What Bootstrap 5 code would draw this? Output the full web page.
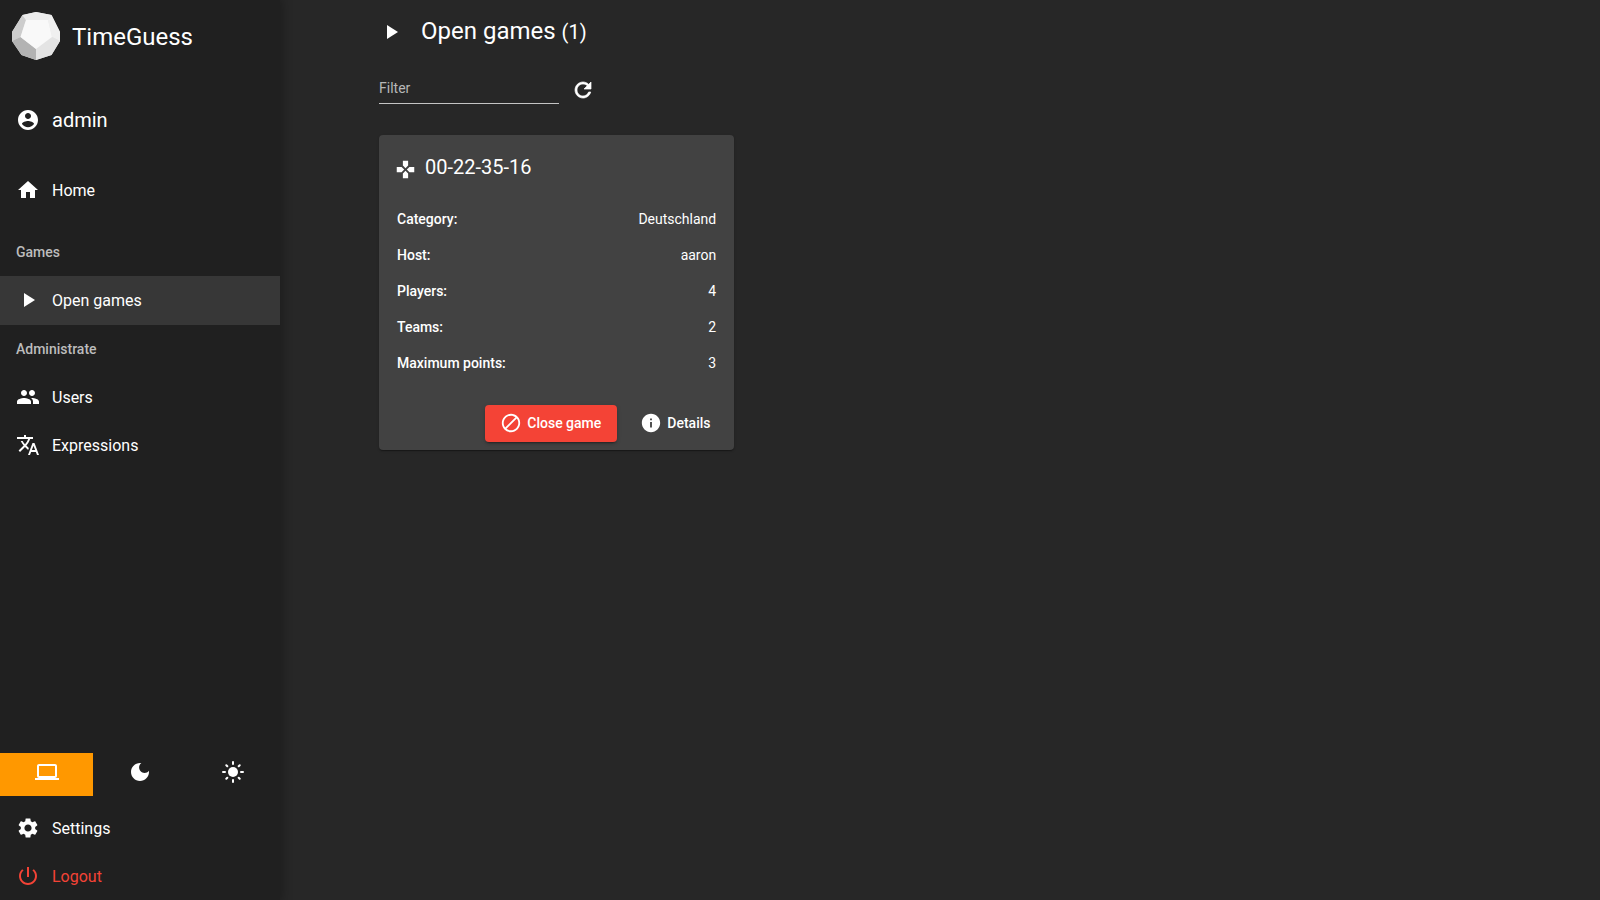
<!DOCTYPE html>
<html lang="en" data-bs-theme="dark">
<head>
<meta charset="utf-8">
<meta name="viewport" content="width=device-width, initial-scale=1">
<title>TimeGuess</title>
<link rel="stylesheet" href="https://cdn.jsdelivr.net/npm/bootstrap@5.3.0/dist/css/bootstrap.min.css">
<style>
  body { font-family: Roboto, "Liberation Sans", sans-serif; font-size: 14px; line-height: 20px; background: #272727; color: #fff; }
  svg { fill: currentColor; flex: none; width: 24px; height: 24px; }
  .side { width: 280px; background: #202020; box-shadow: 0 0 10px 2px rgba(0,0,0,.28); }
  .brand { height: 72px; padding-left: 12px; gap: 12px; font-size: 24px; }
  .brand svg { width: 48px; height: 48px; }
  .brand span { padding-top: 2px; }
  .side .nav-link { height: 48px; padding: 1px 16px 0; gap: 12px; font-size: 16px; color: #fff; }
  .side .nav-link svg { margin-top: -1px; }
  .side .nav-link.user { padding-top: 0; font-size: 20px; margin-top: 24px; margin-bottom: 22px; }
  .side .nav-link.user svg { margin-top: 0; }
  .side .nav-link.active { height: 49px; padding-top: 0; background: #373737; }
  .side .nav-link.logout { color: #f44336; }
  .section-label { height: 48px; padding-left: 16px; font-weight: 500; color: #bcbcbc; }
  .section-label.first { margin-top: 14px; }
  .modes { height: 43px; margin-bottom: 8px; }
  .modes .btn { border-radius: 0; padding: 0 0 5px; color: #fff; border: 0; }
  .modes .btn.active { background: #ff9800; color: #fff; }
  .content { padding-left: 99px; }
  .page-title { height: 62px; gap: 18px; font-size: 24px; font-weight: 400; line-height: 32px; }
  .page-title svg { margin-top: 2px; }
  .page-title small { font-size: 20px; }
  .filter-bar { margin-top: 11px; }
  .filter { width: 180px; height: 31px; padding: 0 0 1px; border: 0; border-bottom: 1px solid #c4c4c4; border-radius: 0; background: none; font-size: 14px; }
  .filter::placeholder { color: #b7b7b7; opacity: 1; }
  .reload { margin: 2px 0 0 11.5px; stroke: currentColor; stroke-width: .7; }
  .game { width: 355px; height: 315px; margin-top: 31px; background: #424242; border: 0; border-radius: 4px; color: #fff;
    box-shadow: 0 2px 1px -1px rgba(0,0,0,.2), 0 1px 1px rgba(0,0,0,.14), 0 1px 3px rgba(0,0,0,.12); }
  .game h2 { margin: 19px 0 0 15.5px; gap: 9.5px; font-size: 20px; font-weight: 400; line-height: 26px; }
  .game h2 svg { width: 21px; height: 21px; margin-top: 4px; }
  .facts { margin: 21px 17.8px 0 18px; }
  .facts div { height: 36px; }
  .facts dt { font-weight: 500; }
  .game .btn { height: 37px; font-size: 14px; font-weight: 500; color: #fff; border: 0; border-radius: 4px; padding: 0 15.5px; gap: 5px; }
  .game .btn svg { width: 22px; height: 22px; margin-top: -1px; }
  .game .btn-close-game { padding: 0 15.5px; background: #f44336; box-shadow: 0 3px 1px -2px rgba(0,0,0,.2), 0 2px 2px rgba(0,0,0,.14), 0 1px 5px rgba(0,0,0,.12); }
</style>
</head>
<body>
<div class="d-flex vh-100 overflow-hidden">
  <aside class="side d-flex flex-column flex-shrink-0">
    <div class="brand d-flex align-items-center">
      <svg viewBox="0 0 48 48">
        <path fill="#e4e4e4" d="M24 0 39.500 3 48 20V29L39.500 43 24 48 9.500 43 0 29V20L10.500 3Z"/>
        <path fill="#cdcdcd" d="M10.500 3 14 8 8.500 25 0 29V20Z"/>
        <path fill="#ebebeb" d="M24 0 39.500 3 36 8H14L10.500 3Z"/>
        <path fill="#f0f0f0" d="M39.500 3 48 20V29L40 25 36 8Z"/>
        <path fill="#b3b3b3" d="M0 29 8.500 25 24 37V48L9.500 43Z"/>
        <path fill="#e4e4e4" d="M24 37 40 25 48 29 39.500 43 24 48Z"/>
        <path fill="#f9f9f9" d="M14 8H36L40 25 24 37 8.500 25Z"/>
      </svg>
      <span>TimeGuess</span>
    </div>
    <nav class="nav flex-column">
      <a class="nav-link user d-flex align-items-center" href="#"><svg viewBox="0 0 24 24"><path d="M12 2C6.48 2 2 6.48 2 12s4.48 10 10 10 10-4.48 10-10S17.52 2 12 2zm0 3c1.66 0 3 1.34 3 3s-1.34 3-3 3-3-1.34-3-3 1.34-3 3-3zm0 14.2c-2.5 0-4.71-1.28-6-3.22.03-1.99 4-3.08 6-3.08 1.99 0 5.97 1.09 6 3.08-1.29 1.94-3.5 3.22-6 3.22z"/></svg>admin</a>
      <a class="nav-link d-flex align-items-center" href="#"><svg viewBox="0 0 24 24"><path d="M10 20v-6h4v6h5v-8h3L12 3 2 12h3v8z"/></svg>Home</a>
      <div class="section-label first d-flex align-items-center">Games</div>
      <a class="nav-link active d-flex align-items-center" href="#"><svg viewBox="0 0 24 24"><path d="M8 5v14l11-7z"/></svg>Open games</a>
      <div class="section-label d-flex align-items-center">Administrate</div>
      <a class="nav-link d-flex align-items-center" href="#"><svg viewBox="0 0 24 24"><path d="M16 11c1.66 0 2.99-1.34 2.99-3S17.66 5 16 5c-1.66 0-3 1.34-3 3s1.34 3 3 3zm-8 0c1.66 0 2.99-1.34 2.99-3S9.66 5 8 5C6.34 5 5 6.34 5 8s1.34 3 3 3zm0 2c-2.33 0-7 1.17-7 3.5V19h14v-2.5c0-2.33-4.67-3.5-7-3.5zm8 0c-.29 0-.62.02-.97.05 1.16.84 1.97 1.97 1.97 3.45V19h6v-2.5c0-2.33-4.67-3.5-7-3.5z"/></svg>Users</a>
      <a class="nav-link d-flex align-items-center" href="#"><svg viewBox="0 0 24 24"><path d="M12.87 15.07l-2.54-2.51.03-.03c1.74-1.94 2.98-4.17 3.71-6.53H17V4h-7V2H8v2H1v1.99h11.17C11.5 7.92 10.44 9.75 9 11.35 8.07 10.32 7.3 9.19 6.69 8h-2c.73 1.63 1.73 3.17 2.98 4.56l-5.09 5.02L4 19l5-5 3.11 3.11.76-2.04zM18.5 10h-2L12 22h2l1.12-3h4.75L21 22h2l-4.5-12zm-2.62 7l1.62-4.33L19.12 17h-3.24z"/></svg>Expressions</a>
    </nav>
    <div class="modes row g-0 mt-auto">
      <button class="btn active col d-flex align-items-center justify-content-center" aria-label="System theme"><svg viewBox="0 0 24 24"><path d="M20 18c1.1 0 1.99-.9 1.99-2L22 6c0-1.1-.9-2-2-2H4c-1.1 0-2 .9-2 2v10c0 1.1.9 2 2 2H0v2h24v-2h-4zM4 6h16v10H4V6z"/></svg></button>
      <button class="btn col d-flex align-items-center justify-content-center" aria-label="Dark theme"><svg viewBox="0 0 24 24"><path d="M12 3c-4.97 0-9 4.03-9 9s4.03 9 9 9 9-4.03 9-9c0-.46-.04-.92-.1-1.36-.98 1.37-2.58 2.26-4.4 2.26-2.98 0-5.4-2.42-5.4-5.4 0-1.81.89-3.42 2.26-4.4-.44-.06-.9-.1-1.36-.1z"/></svg></button>
      <button class="btn col d-flex align-items-center justify-content-center" aria-label="Light theme"><svg viewBox="0 0 24 24"><circle cx="12" cy="12" r="5"/><path fill="none" stroke="currentColor" stroke-width="2" stroke-linecap="round" d="M12 2v2M12 20v2M2 12h2M20 12h2M5.3 5.3l1 1M17.7 17.7l1 1M5.3 18.7l1-1M17.7 6.3l1-1"/></svg></button>
    </div>
    <nav class="nav flex-column">
      <a class="nav-link d-flex align-items-center" href="#"><svg viewBox="0 0 24 24"><path d="M19.14 12.94c.04-.3.06-.61.06-.94 0-.32-.02-.64-.07-.94l2.03-1.58c.18-.14.23-.41.12-.61l-1.92-3.32c-.12-.22-.37-.29-.59-.22l-2.39.96c-.5-.38-1.03-.7-1.62-.94l-.36-2.54c-.04-.24-.24-.41-.48-.41h-3.84c-.24 0-.43.17-.47.41l-.36 2.54c-.59.24-1.13.57-1.62.94l-2.39-.96c-.22-.08-.47 0-.59.22L2.74 8.87c-.12.21-.08.47.12.61l2.03 1.58c-.05.3-.09.63-.09.94s.02.64.07.94l-2.03 1.58c-.18.14-.23.41-.12.61l1.92 3.32c.12.22.37.29.59.22l2.39-.96c.5.38 1.03.7 1.62.94l.36 2.54c.05.24.24.41.48.41h3.84c.24 0 .44-.17.47-.41l.36-2.54c.59-.24 1.13-.56 1.62-.94l2.39.96c.22.08.47 0 .59-.22l1.92-3.32c.12-.22.07-.47-.12-.61l-2.01-1.58zM12 15.6c-1.98 0-3.6-1.62-3.6-3.6s1.62-3.6 3.6-3.6 3.6 1.62 3.6 3.6-1.62 3.6-3.6 3.6z"/></svg>Settings</a>
      <a class="nav-link logout d-flex align-items-center" href="#"><svg viewBox="0 0 24 24"><path d="M13 3h-2v10h2V3zm4.83 2.17l-1.42 1.42C17.99 7.86 19 9.81 19 12c0 3.87-3.13 7-7 7s-7-3.13-7-7c0-2.19 1.01-4.14 2.58-5.42L6.17 5.17C4.23 6.82 3 9.26 3 12c0 4.97 4.03 9 9 9s9-4.03 9-9c0-2.74-1.23-5.18-3.17-6.83z"/></svg>Logout</a>
    </nav>
  </aside>
  <main class="content flex-grow-1">
    <h1 class="page-title d-flex align-items-center mb-0"><svg viewBox="0 0 24 24"><path d="M8 5v14l11-7z"/></svg><span>Open games <small>(1)</small></span></h1>
    <div class="filter-bar d-flex align-items-center">
      <input class="filter" type="text" placeholder="Filter" aria-label="Filter">
      <svg class="reload" viewBox="0 0 24 24"><path d="M17.65 6.35C16.2 4.9 14.21 4 12 4c-4.42 0-7.99 3.58-7.99 8s3.57 8 7.99 8c3.73 0 6.84-2.55 7.73-6h-2.08c-.82 2.33-3.04 4-5.65 4-3.31 0-6-2.69-6-6s2.69-6 6-6c1.66 0 3.14.69 4.22 1.78L13 11h7V4l-2.35 2.35z"/></svg>
    </div>
    <section class="card game">
      <h2 class="d-flex align-items-center"><svg viewBox="0 0 24 24"><path d="M15 7.500V2H9v5.500l3 3 3-3zM7.500 9H2v6h5.500l3-3-3-3zM9 16.500V22h6v-5.500l-3-3-3 3zM16.500 9l-3 3 3 3H22V9h-5.500z"/></svg>00-22-35-16</h2>
      <dl class="facts mb-0">
        <div class="d-flex justify-content-between align-items-center"><dt>Category:</dt><dd class="mb-0">Deutschland</dd></div>
        <div class="d-flex justify-content-between align-items-center"><dt>Host:</dt><dd class="mb-0">aaron</dd></div>
        <div class="d-flex justify-content-between align-items-center"><dt>Players:</dt><dd class="mb-0">4</dd></div>
        <div class="d-flex justify-content-between align-items-center"><dt>Teams:</dt><dd class="mb-0">2</dd></div>
        <div class="d-flex justify-content-between align-items-center"><dt>Maximum points:</dt><dd class="mb-0">3</dd></div>
      </dl>
      <div class="d-flex justify-content-end gap-2 mt-auto p-2">
        <button class="btn btn-close-game d-flex align-items-center"><svg viewBox="0 0 24 24"><path d="M12 2C6.480 2 2 6.480 2 12s4.480 10 10 10 10-4.480 10-10S17.520 2 12 2zM4 12c0-4.420 3.580-8 8-8 1.850 0 3.550.63 4.900 1.690L5.690 16.900C4.630 15.550 4 13.850 4 12zm8 8c-1.850 0-3.550-.63-4.900-1.690L18.310 7.100C19.370 8.450 20 10.150 20 12c0 4.420-3.580 8-8 8z"/></svg>Close game</button>
        <button class="btn d-flex align-items-center"><svg viewBox="0 0 24 24"><path d="M12 2C6.480 2 2 6.480 2 12s4.480 10 10 10 10-4.480 10-10S17.520 2 12 2zm1 15h-2v-6h2v6zm0-8h-2V7h2v2z"/></svg>Details</button>
      </div>
    </section>
  </main>
</div>
<script src="https://cdn.jsdelivr.net/npm/bootstrap@5.3.0/dist/js/bootstrap.bundle.min.js"></script>
</body>
</html>
